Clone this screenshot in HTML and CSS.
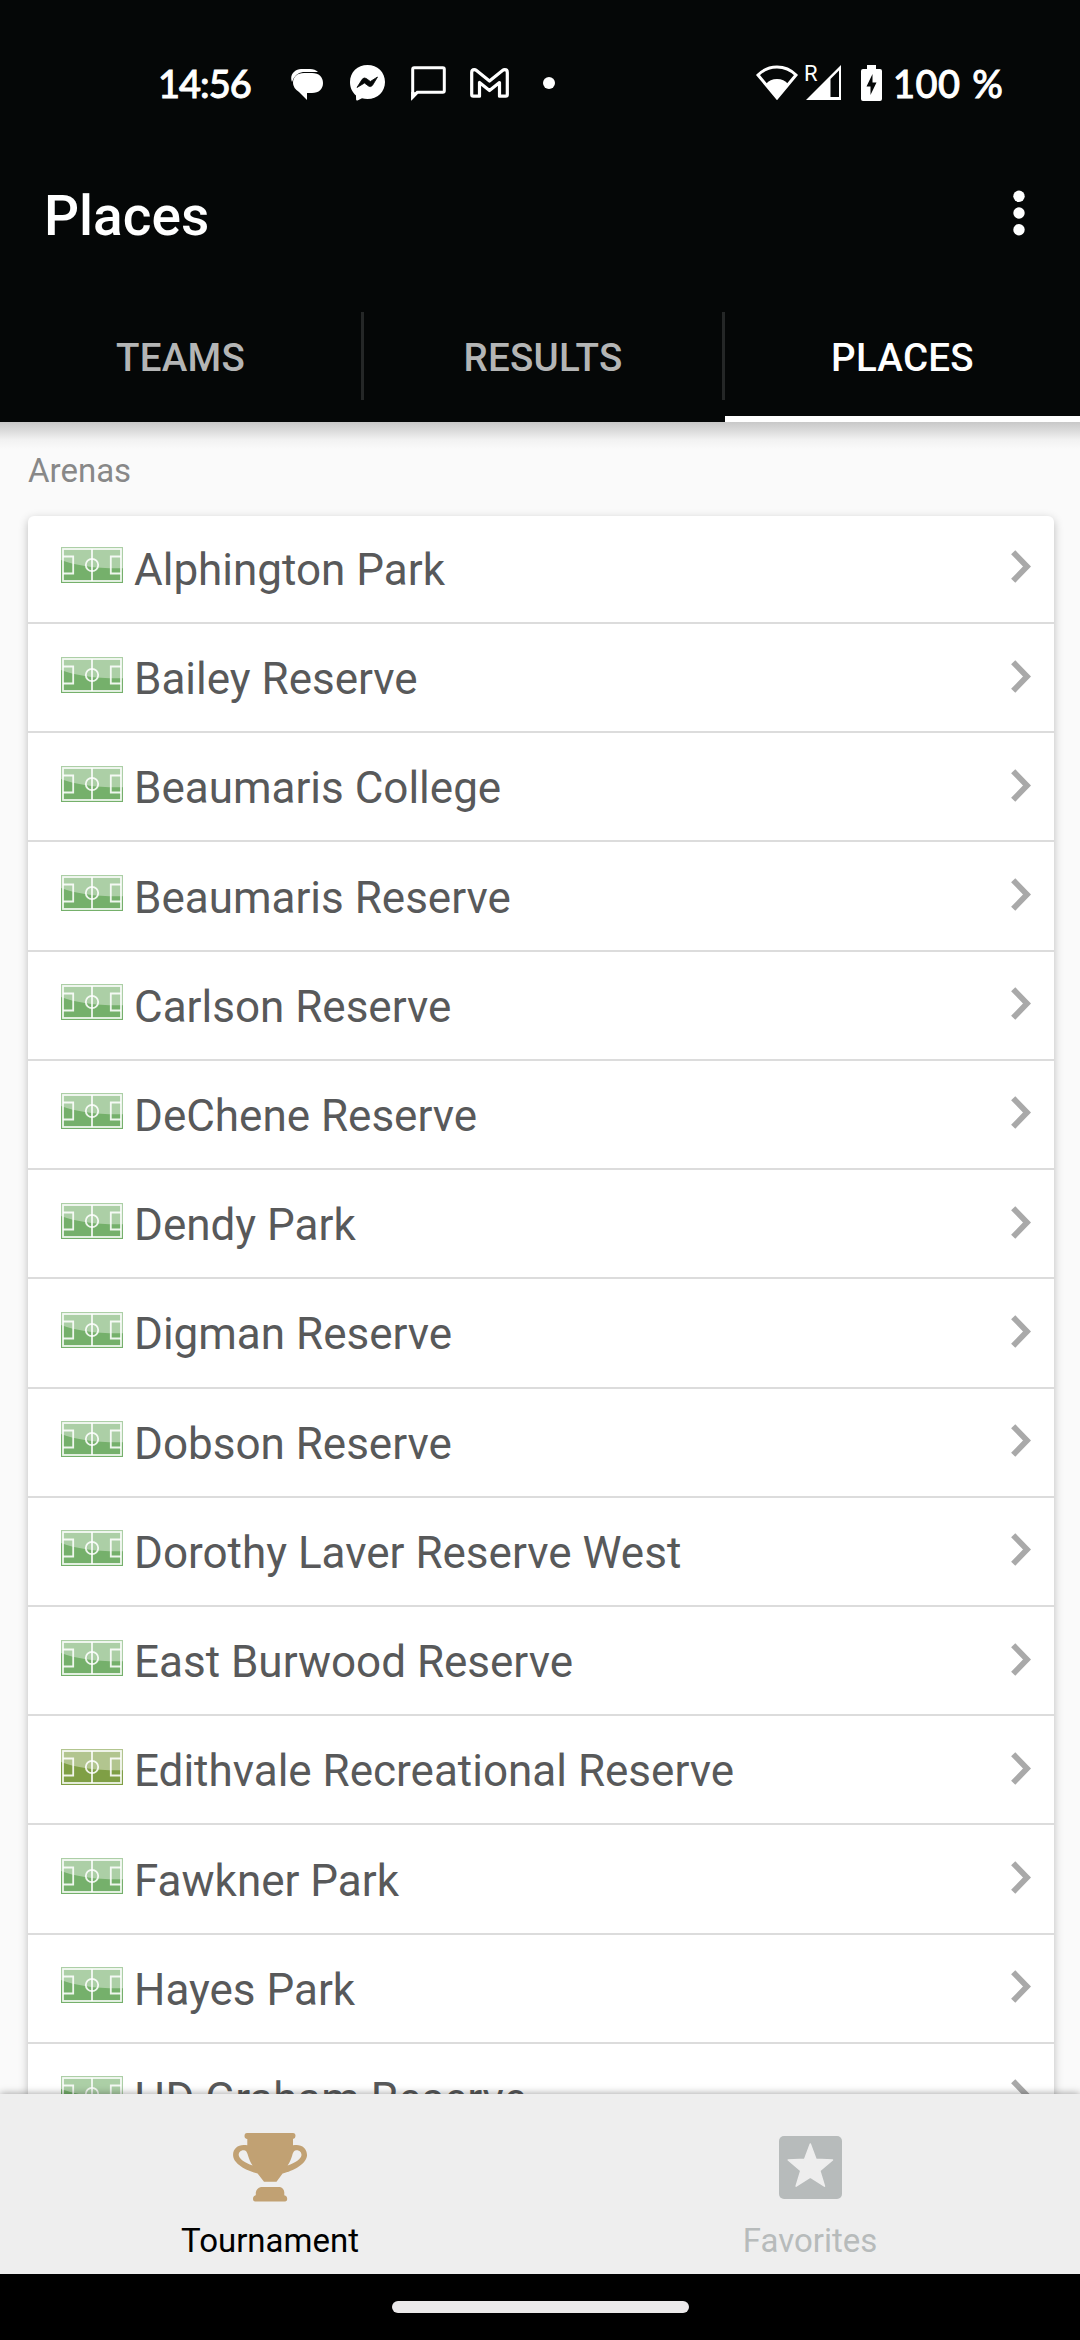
FILE: index.html
```html
<!DOCTYPE html>
<html lang="en">
<head>
    <meta charset="UTF-8">
    <meta name="viewport" content="width=device-width, initial-scale=1.0">
    <title>Places</title>
    <link rel="stylesheet" href="styles.css">
</head>
<body>
    <!-- Shared icons -->
    <svg class="sprite" width="0" height="0">
        <symbol id="pitch" viewBox="0 0 62 36">
            <rect width="62" height="36" fill="currentColor"/>
            <path d="M0 0H62V21.3Q24 22 0 13Z" fill="#fff" fill-opacity="0.4"/>
            <g fill="none" stroke="#fff" stroke-opacity="0.88" stroke-width="1.8">
                <rect x="2" y="2" width="58" height="32"/>
                <path d="M31 2V34M2 9.5H12.2V26.5H2M60 9.5H49.8V26.5H60"/>
                <circle cx="31" cy="18" r="6.2"/>
            </g>
        </symbol>
        <symbol id="chevron" viewBox="0 0 20 33">
            <path d="M2.2 2.2L16 16.5L2.2 30.8" fill="none" stroke="#a9a9a9" stroke-width="5.8"/>
        </symbol>
    </svg>

    <div class="status-bar">
        <span class="clock">14:56</span>
        <svg class="icon-chat" width="34" height="32" viewBox="0 0 34 32">
            <path d="M2 13C-1 6 5 0 11 0H20Q25 0 28 3H13Q5 4 2 13Z" fill="#fff"/>
            <path d="M14 4H22C29 4 33 8 33 14C33 20 29 24 22 24H17V31L9 23Q3 19 3 14C3 8 7 4 14 4Z" fill="#fff"/>
        </svg>
        <svg class="icon-messenger" width="35" height="36" viewBox="0 0 35 36">
            <path d="M17.5 0C27.5 0 35 7.3 35 17C35 26.8 27.5 34 17.5 34Q14.5 34 12 33.2L7.5 35.4Q6.2 35.8 6.1 34.5L6 30.5C2.3 27.3 0 22.6 0 17C0 7.3 7.5 0 17.5 0Z" fill="#fff"/>
            <path d="M7 22.5L12.2 14.3Q14 12 16.3 13.5L20.3 16.5L27.5 12L22.5 20.3Q20.8 22.5 18.5 21L14.5 18Z" fill="#050707" stroke="#050707" stroke-width="0.8"/>
        </svg>
        <svg class="icon-message" width="35" height="35" viewBox="0 0 35 35">
            <path d="M1.7 31V3.2Q1.7 1.7 3.2 1.7H31.8Q33.3 1.7 33.3 3.2V24.8Q33.3 26.3 31.8 26.3H6.3Z" fill="none" stroke="#fff" stroke-width="3"/>
            <path d="M0.2 26V34.5L8 26.5Z" fill="#fff"/>
        </svg>
        <svg class="icon-mail" width="39" height="30" viewBox="0 0 39 30">
            <path d="M1.7 4.5Q1.7 1.7 4.2 1.7Q5.5 1.7 6.5 2.5L19.5 13L32.5 2.5Q33.500 1.7 34.8 1.7Q37.3 1.7 37.3 4.500V26.5Q37.3 28.2 35.7 28.2H29.5V14.5L19.5 22.500L9.5 14.5V28.2H3.3Q1.7 28.2 1.7 26.5Z" fill="none" stroke="#fff" stroke-width="3.2" stroke-linejoin="round"/>
        </svg>
        <span class="more-dot"></span>

        <div class="status-right">
            <svg class="icon-wifi" width="42" height="36" viewBox="0 0 42 36">
                <path d="M2 10Q10 2 21 2Q32 2 40 10L21 33Z" fill="none" stroke="#fff" stroke-width="3"/>
                <path d="M10 19Q14 14 21 14Q28 14 32 19L21 34Z" fill="#fff"/>
            </svg>
            <div class="signal">
                <span class="roaming">R</span>
                <svg width="36" height="36" viewBox="0 0 36 36">
                    <path d="M0 35L35 0V35Z" fill="#fff"/>
                    <path d="M24.5 14L33 5.5V32H24.5Z" fill="#050707"/>
                </svg>
            </div>
            <svg class="icon-battery" width="21" height="36" viewBox="0 0 21 36">
                <path d="M6 0H15V4H19Q21 4 21 6V34Q21 36 19 36H2Q0 36 0 34V6Q0 4 2 4H6Z" fill="#fff"/>
                <path d="M11.5 9V17.5H15.5L9.5 30V21.5H5.5Z" fill="#050707"/>
            </svg>
            <span class="percent">100 %</span>
        </div>
    </div>

    <header>
        <div class="title-bar">
            <h1>Places</h1>
            <svg width="12" height="46" viewBox="0 0 12 46" fill="#fff">
                <circle cx="6" cy="6.3" r="5.7"/>
                <circle cx="6" cy="23" r="5.7"/>
                <circle cx="6" cy="39.7" r="5.7"/>
            </svg>
        </div>
        <nav class="tabs">
            <a class="tab">TEAMS</a>
            <span class="separator"></span>
            <a class="tab">RESULTS</a>
            <span class="separator"></span>
            <a class="tab active">PLACES</a>
        </nav>
    </header>

    <main>
        <h2>Arenas</h2>
        <ul class="places">
            <li><svg class="pitch"><use href="#pitch"/></svg><span>Alphington Park</span><svg class="chevron"><use href="#chevron"/></svg></li>
            <li><svg class="pitch"><use href="#pitch"/></svg><span>Bailey Reserve</span><svg class="chevron"><use href="#chevron"/></svg></li>
            <li><svg class="pitch"><use href="#pitch"/></svg><span>Beaumaris College</span><svg class="chevron"><use href="#chevron"/></svg></li>
            <li><svg class="pitch"><use href="#pitch"/></svg><span>Beaumaris Reserve</span><svg class="chevron"><use href="#chevron"/></svg></li>
            <li><svg class="pitch"><use href="#pitch"/></svg><span>Carlson Reserve</span><svg class="chevron"><use href="#chevron"/></svg></li>
            <li><svg class="pitch"><use href="#pitch"/></svg><span>DeChene Reserve</span><svg class="chevron"><use href="#chevron"/></svg></li>
            <li><svg class="pitch"><use href="#pitch"/></svg><span>Dendy Park</span><svg class="chevron"><use href="#chevron"/></svg></li>
            <li><svg class="pitch"><use href="#pitch"/></svg><span>Digman Reserve</span><svg class="chevron"><use href="#chevron"/></svg></li>
            <li><svg class="pitch"><use href="#pitch"/></svg><span>Dobson Reserve</span><svg class="chevron"><use href="#chevron"/></svg></li>
            <li><svg class="pitch"><use href="#pitch"/></svg><span>Dorothy Laver Reserve West</span><svg class="chevron"><use href="#chevron"/></svg></li>
            <li><svg class="pitch"><use href="#pitch"/></svg><span>East Burwood Reserve</span><svg class="chevron"><use href="#chevron"/></svg></li>
            <li><svg class="pitch dry"><use href="#pitch"/></svg><span>Edithvale Recreational Reserve</span><svg class="chevron"><use href="#chevron"/></svg></li>
            <li><svg class="pitch"><use href="#pitch"/></svg><span>Fawkner Park</span><svg class="chevron"><use href="#chevron"/></svg></li>
            <li><svg class="pitch"><use href="#pitch"/></svg><span>Hayes Park</span><svg class="chevron"><use href="#chevron"/></svg></li>
            <li><svg class="pitch"><use href="#pitch"/></svg><span>HD Graham Reserve</span><svg class="chevron"><use href="#chevron"/></svg></li>
        </ul>
    </main>

    <footer>
        <a class="footer-item active">
            <svg width="75" height="69" viewBox="0 0 75 69" fill="#c1a173">
                <path fill-rule="evenodd" d="M14 0H60Q62.5 0 62.5 3Q62.5 5.5 60 6V12.3C68 10.5 74.3 15 74 22.5C73.5 31 60 38 49.6 40.5L43.5 48.7H31L24.6 40.5C14 38 0.5 31 0.1 22.5C-0.3 15 6 10.5 14.3 12.3V6Q11.5 5.5 11.5 3Q11.5 0 14 0ZM15 22.5C14 18.5 12.5 17.3 10.5 17.3C7.5 17.3 5.7 19.5 5.7 22C5.7 25.5 12 30 19.6 32.5C17.5 29.5 16 26 15 22.5ZM59.2 22.5C58.2 26 56.7 29.5 54.6 32.5C62.2 30 68.5 25.5 68.5 22C68.5 19.5 66.7 17.3 63.7 17.3C61.7 17.3 60.2 18.5 59.2 22.5Z"/>
                <path d="M28 54H47Q51 55 51.3 59.5V62.3Q54.2 63 54.2 65.8Q54.2 68.5 52 68.5H22.2Q20 68.5 20 65.8Q20 63 22.8 62.3V59.5Q23.5 55 28 54Z"/>
            </svg>
            <span>Tournament</span>
        </a>
        <a class="footer-item">
            <svg width="63" height="69" viewBox="0 0 63 69">
                <rect y="3" width="63" height="63" rx="5" fill="#b7bbbb"/>
                <path d="M31.3 11L37 26.3L53.5 26.9L40.8 37.8L45.5 53.2L31.3 44L17.1 53.2L21.8 37.8L9.2 26.9L25.6 26.3Z" fill="#eee" stroke="#eee" stroke-width="1.5" stroke-linejoin="round"/>
            </svg>
            <span>Favorites</span>
        </a>
    </footer>

    <div class="gesture-bar"><span></span></div>
</body>
</html>
```
FILE: styles.css
```css
* {
    margin: 0;
    padding: 0;
    box-sizing: border-box;
}

body {
    width: 1080px;
    height: 2340px;
    display: flex;
    flex-direction: column;
    overflow: hidden;
    font-family: Roboto, "Liberation Sans", sans-serif;
    background-color: #fafafa;
}

svg {
    display: block;
    flex-shrink: 0;
}

.sprite {
    position: absolute;
}

/* Status bar */
.status-bar {
    height: 166px;
    padding: 0 78px 0 158px;
    display: flex;
    align-items: center;
    background-color: #050707;
    color: #fff;
    font-family: Lato, sans-serif;
    font-size: 38px;
    font-weight: 500;
    line-height: 44px;
    white-space: nowrap;
}

.clock {
    width: 132px;
    letter-spacing: -1px;
    -webkit-text-stroke: 0.9px #fff;
}

.icon-chat {
    margin-top: 3px;
}

.icon-messenger {
    margin-left: 26px;
}

.icon-message {
    margin-left: 26px;
}

.icon-mail {
    margin-left: 24px;
}

.more-dot {
    width: 12px;
    height: 12px;
    margin-left: 34px;
    border-radius: 50%;
    background-color: #fff;
}

.status-right {
    display: flex;
    align-items: center;
    margin-left: auto;
}

.signal {
    position: relative;
    margin-left: 8px;
}

.roaming {
    position: absolute;
    left: -2px;
    top: -3px;
    font-family: Roboto, sans-serif;
    font-size: 22px;
    font-weight: 400;
    line-height: 24px;
}

.icon-battery {
    margin-left: 19px;
}

.percent {
    width: 109px;
    margin-left: 11px;
    letter-spacing: 0.4px;
    word-spacing: 2px;
    -webkit-text-stroke: 0.9px #fff;
}

/* Header */
header {
    height: 256px;
    background-color: #050707;
    color: #fff;
}

.title-bar {
    height: 122px;
    padding: 0 55px 28px 44px;
    display: flex;
    align-items: center;
    justify-content: space-between;
}

h1 {
    font-size: 55px;
    font-weight: 500;
    line-height: 64px;
    padding-top: 5px;
}

.tabs {
    height: 134px;
    display: grid;
    grid-template-columns: 361px 3px 358px 3px 355px;
}

.tab {
    padding-top: 47px;
    color: #b4b5b5;
    font-size: 38.5px;
    font-weight: 500;
    letter-spacing: 0.3px;
    line-height: 46px;
    text-align: center;
}

.tab.active {
    color: #fff;
    border-bottom: 6px solid #fff;
}

.separator {
    height: 88px;
    margin-top: 24px;
    background-color: #252727;
}

/* List of places */
main {
    flex: 1;
    min-height: 0;
    overflow: hidden;
    padding: 29px 26px 0 28px;
    background: linear-gradient(#c8c8c8, #dedede 10px, #f2f2f2 18px, #fafafa 27px) no-repeat;
}

h2 {
    height: 65px;
    color: #888;
    font-size: 33px;
    font-weight: 400;
    line-height: 40px;
}

.places {
    list-style-type: none;
    border-radius: 6px;
    background-color: #fff;
    box-shadow: 0 3px 10px rgba(0, 0, 0, 0.25);
}

.places li {
    height: 109.23px;
    padding: 2px 23px 0 33px;
    display: flex;
    align-items: center;
    border-bottom: 2px solid #dcdcdc;
    color: #58595a;
    font-size: 44px;
    line-height: 52px;
}

.places li:first-child {
    height: 108px;
    padding-top: 0;
}

.places span {
    flex: 1;
    padding: 1px 0 0 11px;
}

.pitch {
    width: 62px;
    height: 36px;
    margin-bottom: 8px;
    color: #75b06b;
}

.pitch.dry {
    color: #7f9f45;
}

.chevron {
    width: 20px;
    height: 33px;
    margin-bottom: 5px;
}

/* Bottom navigation */
footer {
    position: relative;
    height: 180px;
    display: flex;
    background-color: #eee;
    box-shadow: 0 0 8px rgba(0, 0, 0, 0.4);
}

.footer-item {
    flex: 1;
    padding-top: 39px;
    display: flex;
    flex-direction: column;
    align-items: center;
    color: #b7bbbb;
    font-size: 33px;
    line-height: 40px;
}

.footer-item.active {
    color: #000;
}

.footer-item span {
    margin-top: 19px;
}

.gesture-bar {
    position: relative;
    height: 66px;
    display: flex;
    align-items: center;
    justify-content: center;
    background-color: #000;
}

.gesture-bar span {
    width: 297px;
    height: 12px;
    border-radius: 6px;
    background-color: #ebe9ea;
}
```
